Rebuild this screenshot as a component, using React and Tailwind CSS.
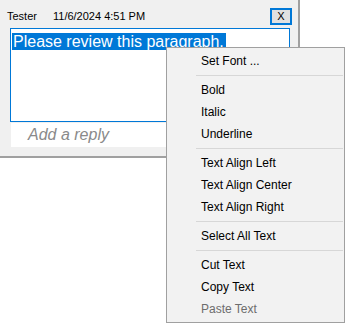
import React from "react";

const menuItems = [
  { label: "Set Font ..." },
  { sep: true },
  { label: "Bold" },
  { label: "Italic" },
  { label: "Underline" },
  { sep: true },
  { label: "Text Align Left" },
  { label: "Text Align Center" },
  { label: "Text Align Right" },
  { sep: true },
  { label: "Select All Text" },
  { sep: true },
  { label: "Cut Text" },
  { label: "Copy Text" },
  { label: "Paste Text", disabled: true },
];

const ContextMenu = () => (
  <div className="absolute left-[166px] top-[47px] w-[179px] h-[276px] bg-[#f2f2f2] border border-[#a0a0a0] py-[2px] font-['Liberation_Sans',Arial,sans-serif] text-[12px]">
    {menuItems.map((item, i) =>
      item.sep ? (
        <div key={i} className="h-[7px] flex items-center ml-[29px] mr-[1px]">
          <div className="h-px w-full bg-[#d7d7d7]" />
        </div>
      ) : (
        <div
          key={i}
          className={
            item.disabled
              ? "h-[22px] flex items-center pl-[34px] text-[#6d6d6d]"
              : "h-[22px] flex items-center pl-[34px] text-black"
          }
        >
          {item.label}
        </div>
      )
    )}
  </div>
);

export default function App() {
  return (
    <div className="relative w-[346px] h-[323px] bg-white overflow-hidden font-['Liberation_Sans',Arial,sans-serif]">
      {/* comment panel */}
      <div className="w-[300px] h-[158px] bg-[#f0f0f0] border-r-2 border-b-2 border-[#a0a0a0] pt-[8px] flex flex-col">
        <div className="h-[17px] flex items-center pl-[7px] pr-[6px] text-[11px] text-black">
          <span>Tester</span>
          <span className="ml-[16px]">11/6/2024 4:51 PM</span>
          <button className="ml-auto w-[22px] h-[17px] border-2 border-[#0078d7] bg-[#e1e1e1] flex items-center justify-center text-[11px] leading-none">
            X
          </button>
        </div>
        <div className="mt-[3px] ml-[10px] w-[280px] h-[94px] border border-[#0078d7] bg-white p-px">
          <span className="inline-block bg-[#0078d7] text-white text-[16px] leading-[17px] pl-px pr-[2px]">
            Please review this paragraph.
          </span>
        </div>
        <div className="mt-px ml-[11px] w-[279px] h-[24px] bg-white flex items-center pl-[17px] text-[16px] italic text-[#8a8a8a]">
          Add a reply
        </div>
      </div>
      <ContextMenu />
    </div>
  );
}
